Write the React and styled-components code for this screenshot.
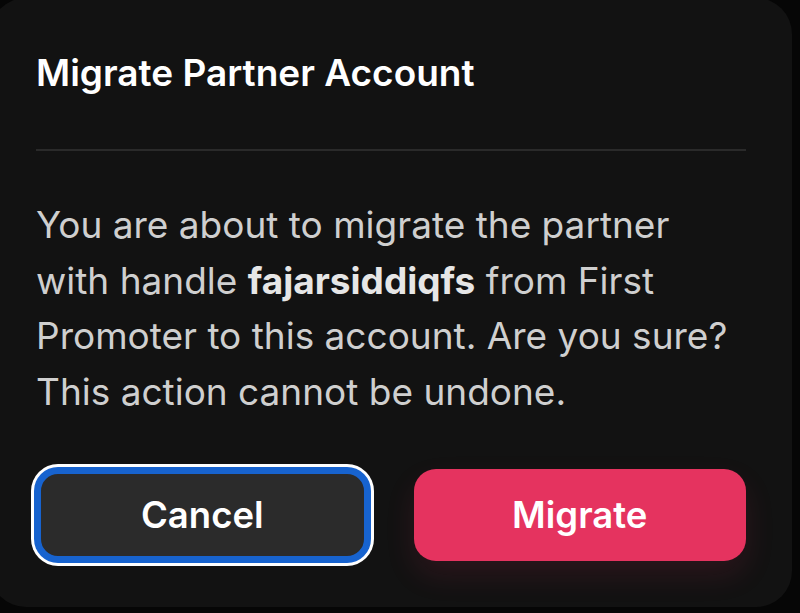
import React from "react";
import styled, { createGlobalStyle } from "styled-components";

const Global = createGlobalStyle`
  html, body {
    margin: 0;
    padding: 0;
    background: #060606;
    overflow: hidden;
  }
  * { box-sizing: border-box; }
`;

const Screen = styled.div`
  width: 800px;
  height: 613px;
  overflow: hidden;
  background: #060606;
`;

const Dialog = styled.div`
  margin-left: -10px;
  margin-top: -2px;
  width: 802px;
  height: 609px;
  background: #121212;
  border-radius: 36px;
  padding: 53px 46px 46px;
  display: flex;
  flex-direction: column;
  font-family: Inter, "Noto Sans", sans-serif;
`;

const Title = styled.h2`
  margin: 0;
  font-size: 37px;
  line-height: 1.2;
  font-weight: 600;
  color: #ffffff;
`;

const Divider = styled.hr`
  margin: 54px 0 0;
  border: none;
  height: 2px;
  background: #2a2a2a;
`;

const Body = styled.p`
  margin: 46px 0 0;
  font-size: 37px;
  line-height: 55.5px;
  font-weight: 400;
  color: #cfcfcf;
  white-space: nowrap;
`;

const Handle = styled.strong`
  font-weight: 700;
  color: #e6e6e6;
`;

const Actions = styled.div`
  margin-top: auto;
  display: grid;
  grid-template-columns: 1fr 1fr;
  gap: 45px;
`;

const Button = styled.button`
  height: 92px;
  border-radius: 22px;
  font-family: Inter, "Noto Sans", sans-serif;
  font-size: 36.5px;
  font-weight: 600;
  color: #ffffff;
  display: flex;
  align-items: center;
  justify-content: center;
  cursor: pointer;
  border: ${(p) => (p.$focused ? "5px solid #1763cf" : "none")};
  background: ${(p) => (p.$variant === "primary" ? "#e5335f" : "#2b2b2b")};
  box-shadow: ${(p) =>
    p.$focused
      ? "0 0 0 2px #1763cf, 0 0 0 5px #ffffff"
      : p.$variant === "primary"
      ? "0 14px 30px rgba(229, 51, 95, 0.12)"
      : "none"};
`;

export default function App() {
  return (
    <>
      <Global />
      <Screen>
        <Dialog>
          <Title>Migrate Partner Account</Title>
          <Divider />
          <Body>
            You are about to migrate the partner
            <br />
            with handle <Handle>fajarsiddiqfs</Handle> from First
            <br />
            Promoter to this account. Are you sure?
            <br />
            This action cannot be undone.
          </Body>
          <Actions>
            <Button $focused>Cancel</Button>
            <Button $variant="primary">Migrate</Button>
          </Actions>
        </Dialog>
      </Screen>
    </>
  );
}
